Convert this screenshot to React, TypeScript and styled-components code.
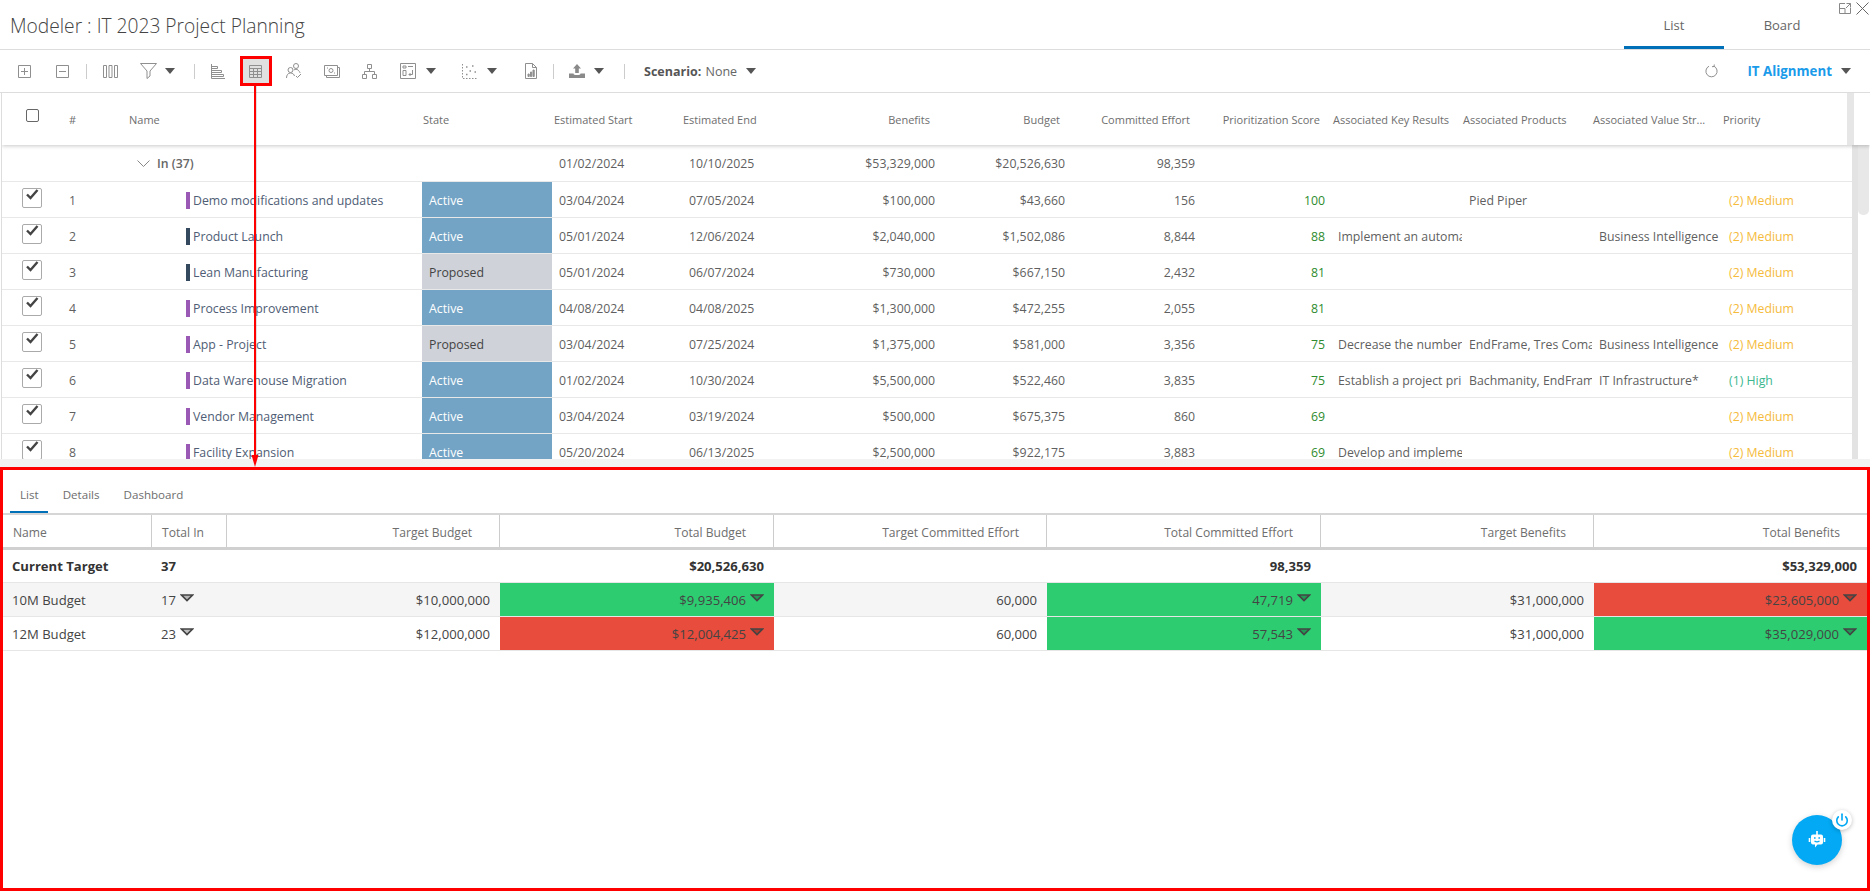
import React from 'react';
import styled, { createGlobalStyle } from 'styled-components';
import { Power } from 'lucide-react';

const FONT = `"Open Sans", "Noto Sans", sans-serif`;
const COLS = '60px 61px 299px 130px 130px 130px 128px 130px 130px 130px 132px 130px 130px 130px';
const HEAD_COLS = '60px 61px 299px 130px 130px 130px 128px 130px 130px 130px 132px 130px 130px 125px';
const PANEL_COLS = '149px 75px 273px 274px 273px 274px 273px 1fr';

const GlobalStyle = createGlobalStyle`
  html, body { margin: 0; padding: 0; background: #fff; }
  body { font-family: ${FONT}; color: #555; }
`;

const Page = styled.div`
  position: relative;
  width: 1870px;
  height: 893px;
  overflow: hidden;
  background: #fff;
  display: flex;
  flex-direction: column;
`;

const Header = styled.div`
  position: relative;
  height: 50px;
  box-sizing: border-box;
  flex: none;
  border-bottom: 1px solid #ddd;
  display: flex;
  align-items: stretch;
  padding: 0 30px 0 10px;
`;

const Title = styled.h1`
  margin: 0 auto 0 0;
  font-size: 19.2px;
  font-weight: 300;
  color: #444;
  line-height: 52px;
`;

const ViewTab = styled.div<{ $active?: boolean; $w: number }>`
  width: ${p => p.$w}px;
  height: 49px;
  box-sizing: border-box;
  text-align: center;
  font-size: 13px;
  line-height: 50px;
  color: #666;
  border-bottom: 3px solid ${p => (p.$active ? '#0070b8' : 'transparent')};
`;

const WindowIcons = styled.div`
  position: absolute;
  top: 2px;
  right: 1px;
  display: flex;
  align-items: center;
  gap: 5px;
`;

const Toolbar = styled.div`
  height: 43px;
  box-sizing: border-box;
  flex: none;
  border-bottom: 1px solid #ddd;
  display: flex;
  align-items: center;
  padding-left: 18px;
  font-size: 13px;
  color: #666;
`;

const ToolIcon = styled.svg<{ $ml?: number }>`
  flex: none;
  margin-left: ${p => p.$ml ?? 0}px;
  fill: none;
  stroke: #8f8f8f;
  stroke-width: 1;
`;

const RefreshIcon = styled(ToolIcon)`
  margin-left: auto;
`;

const ToolSep = styled.span<{ $ml: number }>`
  flex: none;
  width: 1px;
  height: 15px;
  margin-left: ${p => p.$ml}px;
  background: #ccc;
`;

const Caret = styled.span<{ $ml: number; $mr?: number }>`
  flex: none;
  margin-left: ${p => p.$ml}px;
  margin-right: ${p => p.$mr ?? 0}px;
  width: 0;
  height: 0;
  border-left: 5px solid transparent;
  border-right: 5px solid transparent;
  border-top: 6px solid #555;
`;

const Highlight = styled.div<{ $ml: number }>`
  flex: none;
  margin-left: ${p => p.$ml}px;
  width: 32px;
  height: 30px;
  box-sizing: border-box;
  border: 3px solid #f00;
  background: #e0e0e0;
  display: flex;
  align-items: center;
  justify-content: center;
`;

const Scenario = styled.span<{ $ml: number }>`
  margin-left: ${p => p.$ml}px;
  font-size: 12.5px;
  color: #666;
  b { font-weight: 700; color: #555; margin-right: 1px; }
`;

const Alignment = styled.span`
  margin-left: 29px;
  font-size: 13.3px;
  font-weight: 700;
  color: #1a9bea;
`;

const TopGrid = styled.div`
  height: 366px;
  flex: none;
  overflow: hidden;
  margin-left: 1px;
  border-left: 1px solid #ddd;
`;

const HeaderBar = styled.div`
  height: 52px;
  display: flex;
  position: relative;
  z-index: 1;
  box-shadow: 0 1px 4px rgba(0, 0, 0, 0.22);
  background: #fff;
`;

const HeaderCols = styled.div`
  display: grid;
  grid-template-columns: ${HEAD_COLS};
  align-items: center;
  padding-top: 1px;
  box-sizing: border-box;
`;

const HeaderGutter = styled.div`
  width: 7px;
  background: #e6e6e6;
`;

const HeadCell = styled.div<{ $right?: boolean; $pl?: number }>`
  font-size: 11px;
  color: #6e6e6e;
  white-space: nowrap;
  overflow: hidden;
  padding-left: ${p => p.$pl ?? 0}px;
  padding-right: ${p => (p.$right ? 10 : 0)}px;
  text-align: ${p => (p.$right ? 'right' : 'left')};
`;

const HeadCheck = styled.span`
  display: block;
  width: 13px;
  height: 13px;
  box-sizing: border-box;
  margin: -8px 0 0 24px;
  border: 1px solid #666;
  border-radius: 2px;
`;

const Body = styled.div`
  display: flex;
  height: 314px;
`;

const Rows = styled.div`
  width: 1850px;
  flex: none;
`;

const ScrollTrack = styled.div`
  width: 6px;
  flex: none;
  background: #e3e3e3;
`;

const ScrollZone = styled.div`
  flex: 1;
  padding-right: 1px;
`;

const ScrollThumb = styled.div`
  height: 70px;
  background: #e8e8e8;
  border-radius: 0 0 5px 5px;
`;

const Row = styled.div`
  display: grid;
  grid-template-columns: ${COLS};
  height: 36px;
  box-sizing: border-box;
  border-bottom: 1px solid #e8e8e8;
  align-items: stretch;
`;

const GroupRow = styled(Row)`
  height: 37px;
`;

const Cell = styled.div<{ $right?: boolean; $pl?: number; $color?: string }>`
  display: flex;
  align-items: center;
  justify-content: ${p => (p.$right ? 'flex-end' : 'flex-start')};
  padding-left: ${p => p.$pl ?? 0}px;
  padding-right: ${p => (p.$right ? 5 : 0)}px;
  padding-top: 1px;
  font-size: 12.3px;
  color: ${p => p.$color ?? '#5f5f5f'};
  white-space: nowrap;
  overflow: hidden;
  min-width: 0;
`;

const CheckBox = styled.span`
  width: 20px;
  height: 20px;
  box-sizing: border-box;
  margin: -4px 0 0 20px;
  border: 1px solid #aaa;
  border-radius: 2px;
  display: flex;
  align-items: flex-start;
  justify-content: center;
  background: #fff;
`;

const GroupLabel = styled.span`
  display: inline-flex;
  align-items: center;
  gap: 7px;
  font-weight: 600;
  color: #666;
`;

const NameBar = styled.span<{ $color: string }>`
  width: 4px;
  height: 17px;
  flex: none;
  margin-right: 3px;
  background: ${p => p.$color};
`;

const NameText = styled.span`
  color: #4f5d75;
`;

const StateCell = styled.div<{ $active: boolean }>`
  display: flex;
  align-items: center;
  padding-left: 7px;
  padding-top: 1px;
  font-size: 12.3px;
  background: ${p => (p.$active ? '#73a4c5' : '#cfd2d9')};
  color: ${p => (p.$active ? '#fff' : '#444')};
`;

const Splitter = styled.div`
  height: 8px;
  flex: none;
  background: #f2f2f2;
`;

const Panel = styled.div`
  position: relative;
  height: 424px;
  flex: none;
  box-sizing: border-box;
  border: 3px solid #f00;
`;

const PanelTabs = styled.div`
  height: 45px;
  box-sizing: border-box;
  display: flex;
  border-bottom: 2px solid #d6d6d6;
  padding-left: 7px;
  gap: 5px;
`;

const PanelTab = styled.div<{ $active?: boolean }>`
  padding: 0 9px 0 10px;
  height: 43px;
  box-sizing: border-box;
  font-size: 11.6px;
  line-height: 50px;
  color: #6e6e6e;
  border-bottom: 2px solid ${p => (p.$active ? '#0070b8' : 'transparent')};
`;

const PanelHead = styled.div`
  display: grid;
  grid-template-columns: ${PANEL_COLS};
  height: 35px;
  box-sizing: border-box;
  border-bottom: 3px solid #d0d0d0;
`;

const PanelHeadCell = styled.div<{ $right?: boolean; $last?: boolean }>`
  display: flex;
  align-items: center;
  justify-content: ${p => (p.$right ? 'flex-end' : 'flex-start')};
  padding: ${p => (p.$right ? '2px 27px 0 0' : '2px 0 0 10px')};
  font-size: 12.1px;
  color: #6e6e6e;
  border-right: ${p => (p.$last ? 'none' : '1px solid #ccc')};
`;

const PanelRow = styled.div<{ $shade?: boolean; $h?: number }>`
  display: grid;
  grid-template-columns: ${PANEL_COLS};
  height: ${p => p.$h ?? 34}px;
  box-sizing: border-box;
  border-bottom: 1px solid #e6e6e6;
  background: ${p => (p.$shade ? '#f5f5f5' : '#fff')};
`;

const PanelCell = styled.div<{ $right?: boolean; $bold?: boolean; $bg?: string; $pl?: number }>`
  display: flex;
  align-items: center;
  justify-content: ${p => (p.$right ? 'flex-end' : 'flex-start')};
  gap: 4px;
  padding: ${p => (p.$right ? '0 10px 0 0' : `0 0 0 ${p.$pl ?? 9}px`)};
  font-size: 13.1px;
  font-weight: ${p => (p.$bold ? 700 : 400)};
  color: ${p => (p.$bold ? '#333' : '#444')};
  background: ${p => p.$bg ?? 'transparent'};
`;

const Fold = styled.svg`
  flex: none;
  margin-top: -3px;
`;

const Fab = styled.div`
  position: absolute;
  left: 1789px;
  top: 345px;
  width: 50px;
  height: 50px;
  border-radius: 50%;
  background: #03a9f4;
  box-shadow: 0 2px 6px rgba(0, 0, 0, 0.18);
  display: flex;
  align-items: center;
  justify-content: center;
`;

const FabBadge = styled.div`
  position: absolute;
  top: -5px;
  right: -10px;
  width: 20px;
  height: 20px;
  border-radius: 50%;
  background: #fff;
  box-shadow: 0 1px 4px rgba(0, 0, 0, 0.25);
  display: flex;
  align-items: center;
  justify-content: center;
  color: #03a9f4;
`;

const Arrow = styled.svg`
  position: absolute;
  left: 250px;
  top: 86px;
  z-index: 2;
  overflow: visible;
`;

const GREEN = '#2ecc71';
const RED = '#e74c3c';

type Project = {
  name: string;
  bar: string;
  active: boolean;
  start: string;
  end: string;
  benefits: string;
  budget: string;
  effort: string;
  score: number;
  keyResults?: string;
  products?: string;
  stream?: string;
  priority: string;
};

const PURPLE = '#9b59b6';
const NAVY = '#34495e';

const projects: Project[] = [
  { name: 'Demo modifications and updates', bar: PURPLE, active: true, start: '03/04/2024', end: '07/05/2024', benefits: '$100,000', budget: '$43,660', effort: '156', score: 100, products: 'Pied Piper', priority: '(2) Medium' },
  { name: 'Product Launch', bar: NAVY, active: true, start: '05/01/2024', end: '12/06/2024', benefits: '$2,040,000', budget: '$1,502,086', effort: '8,844', score: 88, keyResults: 'Implement an automa', stream: 'Business Intelligence', priority: '(2) Medium' },
  { name: 'Lean Manufacturing', bar: NAVY, active: false, start: '05/01/2024', end: '06/07/2024', benefits: '$730,000', budget: '$667,150', effort: '2,432', score: 81, priority: '(2) Medium' },
  { name: 'Process Improvement', bar: PURPLE, active: true, start: '04/08/2024', end: '04/08/2025', benefits: '$1,300,000', budget: '$472,255', effort: '2,055', score: 81, priority: '(2) Medium' },
  { name: 'App - Project', bar: PURPLE, active: false, start: '03/04/2024', end: '07/25/2024', benefits: '$1,375,000', budget: '$581,000', effort: '3,356', score: 75, keyResults: 'Decrease the number', products: 'EndFrame, Tres Coma', stream: 'Business Intelligence', priority: '(2) Medium' },
  { name: 'Data Warehouse Migration', bar: PURPLE, active: true, start: '01/02/2024', end: '10/30/2024', benefits: '$5,500,000', budget: '$522,460', effort: '3,835', score: 75, keyResults: 'Establish a project pri', products: 'Bachmanity, EndFram', stream: 'IT Infrastructure*', priority: '(1) High' },
  { name: 'Vendor Management', bar: PURPLE, active: true, start: '03/04/2024', end: '03/19/2024', benefits: '$500,000', budget: '$675,375', effort: '860', score: 69, priority: '(2) Medium' },
  { name: 'Facility Expansion', bar: PURPLE, active: true, start: '05/20/2024', end: '06/13/2025', benefits: '$2,500,000', budget: '$922,175', effort: '3,883', score: 69, keyResults: 'Develop and impleme', priority: '(2) Medium' },
];

const FoldMark = () => (
  <Fold width="14" height="8" viewBox="0 0 14 8">
    <path d="M1.5 1h11L7 6.5z" fill="rgba(0,0,0,.25)" stroke="#444" strokeWidth="1.6" />
  </Fold>
);

const App = () => (
  <Page>
    <GlobalStyle />
    <Header>
      <Title>Modeler : IT 2023 Project Planning</Title>
      <ViewTab $active $w={100}>List</ViewTab>
      <ViewTab $w={116}>Board</ViewTab>
      <WindowIcons>
        <svg width="12" height="11" viewBox="0 0 12 11" fill="none" stroke="#888">
          <path d="M6 .5H.5v10h11V5M.5 5.5H6v5M7.5.5h4v4M11.5.5 7 5" />
        </svg>
        <svg width="13" height="13" viewBox="0 0 13 13" fill="none" stroke="#666">
          <path d="M.5.5l12 12M12.5.5l-12 12" />
        </svg>
      </WindowIcons>
    </Header>

    <Toolbar>
      <ToolIcon width="13" height="13" viewBox="0 0 13 13">
        <path d="M.5.5h12v12H.5zM6.5 3v7M3 6.5h7" />
      </ToolIcon>
      <ToolIcon $ml={25} width="13" height="13" viewBox="0 0 13 13">
        <path d="M.5.5h12v12H.5zM3 6.5h7" />
      </ToolIcon>
      <ToolSep $ml={17} />
      <ToolIcon $ml={15.5} width="15" height="13" viewBox="0 0 15 13">
        <path d="M.5.5h3v12h-3zM6 .5h3v12H6zM11.5.5h3v12h-3z" />
      </ToolIcon>
      <ToolIcon $ml={22.5} width="17" height="16" viewBox="0 0 17 16">
        <path d="M.5.5h16L10 8v5l-3 2.5V8z" />
      </ToolIcon>
      <Caret $ml={8} />
      <ToolSep $ml={18.5} />
      <ToolIcon $ml={16} width="14" height="15" viewBox="0 0 14 15">
        <path d="M.5 0v14.5H14M.5 2.5h6v2H.5M.5 6.5h10v2H.5M.5 10.5h12v2H.5" />
      </ToolIcon>
      <Highlight $ml={15}>
        <ToolIcon width="13" height="13" viewBox="0 0 13 13">
          <path d="M.5.5h12v12H.5zM.5 3.5h12M.5 6.5h12M.5 9.5h12M4.5 3.5v9M8.5 3.5v9" />
        </ToolIcon>
      </Highlight>
      <ToolIcon $ml={14} width="16" height="16" viewBox="0 0 16 16">
        <circle cx="10" cy="3" r="2.5" />
        <circle cx="4.5" cy="7" r="2.5" />
        <path d="M.5 15c0-3 1.5-5 4-5s3.5 1.5 4 3M8 7c1-1 3-1 4 0s2 2 2 3M10 13l1.5 1.5L15 11" />
      </ToolIcon>
      <ToolIcon $ml={22} width="16" height="13" viewBox="0 0 16 13">
        <path d="M.5.5h13v10H.5zM2.5 10.5v2h13v-10h-2M3 3h1M10 8h1" />
        <circle cx="7" cy="5.5" r="2" />
      </ToolIcon>
      <ToolIcon $ml={22} width="15" height="15" viewBox="0 0 15 15">
        <path d="M5.5.5h4v4h-4zM.5 10.5h4v4h-4zM10.5 10.5h4v4h-4zM7.5 4.5v3M2.5 10.5v-3h10v3" />
      </ToolIcon>
      <ToolIcon $ml={23} width="16" height="16" viewBox="0 0 16 16">
        <path d="M.5.5h15v15H.5zM3 3h3v2H3zM8 3.5h5M3 7.5h3v5H3zM12.5 7v4.5H9M10.5 10l-1.5 1.5 1.5 1.5" />
      </ToolIcon>
      <Caret $ml={10} />
      <ToolIcon $ml={26.5} width="15" height="15" viewBox="0 0 15 15">
        <path d="M.5 0v14.5H15" strokeDasharray="1.5 1.5" />
        <path d="M4 3h1.5M10 2h1.5M7.5 7H9M12.5 8H14M4 10.5h1.5" strokeWidth="1.4" />
      </ToolIcon>
      <Caret $ml={9.5} />
      <ToolIcon $ml={28} width="12" height="16" viewBox="0 0 12 16">
        <path d="M.5.5h7l4 4v11H.5zM7.5.5v4h4" />
        <path d="M3 13.5V11h1.2v2.5zM5.5 13.5V9h1.2v4.5zM8 13.5V7h1.2v6.5z" fill="#8f8f8f" />
      </ToolIcon>
      <ToolSep $ml={16.5} />
      <ToolIcon $ml={15} width="16" height="16" viewBox="0 0 16 16">
        <path d="M8 1l4 4.5H9.8V10H6.2V5.5H4zM0 10.5h4.5a3.5 1.5 0 0 0 7 0H16V15H0z" fill="#8a8a8a" stroke="none" />
      </ToolIcon>
      <Caret $ml={9} />
      <ToolSep $ml={19.5} />
      <Scenario $ml={19.5}><b>Scenario:</b> None</Scenario>
      <Caret $ml={9} />
      <RefreshIcon width="13" height="14" viewBox="0 0 13 14">
        <path d="M4 2.2A5.6 5.6 0 1 0 9 2.2M9.3 .5 9 2.5l-2 .2" />
      </RefreshIcon>
      <Alignment>IT Alignment</Alignment>
      <Caret $ml={9} $mr={19} />
    </Toolbar>

    <TopGrid>
      <HeaderBar>
        <HeaderCols>
          <HeadCheck />
          <HeadCell $pl={7}>#</HeadCell>
          <HeadCell $pl={6}>Name</HeadCell>
          <HeadCell $pl={1}>State</HeadCell>
          <HeadCell $pl={2}>Estimated Start</HeadCell>
          <HeadCell $pl={1}>Estimated End</HeadCell>
          <HeadCell $right>Benefits</HeadCell>
          <HeadCell $right>Budget</HeadCell>
          <HeadCell $right>Committed Effort</HeadCell>
          <HeadCell $right>Prioritization Score</HeadCell>
          <HeadCell $pl={3}>Associated Key Results</HeadCell>
          <HeadCell $pl={1}>Associated Products</HeadCell>
          <HeadCell $pl={1}>Associated Value Str...</HeadCell>
          <HeadCell $pl={1}>Priority</HeadCell>
        </HeaderCols>
        <HeaderGutter />
      </HeaderBar>
      <Body>
        <Rows>
          <GroupRow>
            <Cell />
            <Cell />
            <Cell $pl={14}>
              <GroupLabel>
                <svg width="13" height="7" viewBox="0 0 13 7" fill="none" stroke="#888">
                  <path d="M.5.5l6 6 6-6" />
                </svg>
                In (37)
              </GroupLabel>
            </Cell>
            <Cell />
            <Cell $pl={7}>01/02/2024</Cell>
            <Cell $pl={7}>10/10/2025</Cell>
            <Cell $right>$53,329,000</Cell>
            <Cell $right>$20,526,630</Cell>
            <Cell $right>98,359</Cell>
          </GroupRow>
          {projects.map((p, i) => (
            <Row key={p.name}>
              <Cell>
                <CheckBox>
                  <svg width="15" height="13" viewBox="0 0 15 13" fill="none" stroke="#444" strokeWidth="2.4">
                    <path d="M2 5.5l3.5 3.5 7-8" />
                  </svg>
                </CheckBox>
              </Cell>
              <Cell $pl={7}>{i + 1}</Cell>
              <Cell $pl={63}>
                <NameBar $color={p.bar} />
                <NameText>{p.name}</NameText>
              </Cell>
              <StateCell $active={p.active}>{p.active ? 'Active' : 'Proposed'}</StateCell>
              <Cell $pl={7}>{p.start}</Cell>
              <Cell $pl={7}>{p.end}</Cell>
              <Cell $right>{p.benefits}</Cell>
              <Cell $right>{p.budget}</Cell>
              <Cell $right>{p.effort}</Cell>
              <Cell $right $color="#2e8b2e">{p.score}</Cell>
              <Cell $pl={8}>{p.keyResults}</Cell>
              <Cell $pl={7}>{p.products}</Cell>
              <Cell $pl={7}>{p.stream}</Cell>
              <Cell $pl={7} $color={p.priority === '(1) High' ? '#3bb78f' : '#f5bb3c'}>{p.priority}</Cell>
            </Row>
          ))}
        </Rows>
        <ScrollTrack />
        <ScrollZone><ScrollThumb /></ScrollZone>
      </Body>
    </TopGrid>

    <Splitter />

    <Panel>
      <PanelTabs>
        <PanelTab $active>List</PanelTab>
        <PanelTab>Details</PanelTab>
        <PanelTab>Dashboard</PanelTab>
      </PanelTabs>
      <PanelHead>
        <PanelHeadCell>Name</PanelHeadCell>
        <PanelHeadCell>Total In</PanelHeadCell>
        <PanelHeadCell $right>Target Budget</PanelHeadCell>
        <PanelHeadCell $right>Total Budget</PanelHeadCell>
        <PanelHeadCell $right>Target Committed Effort</PanelHeadCell>
        <PanelHeadCell $right>Total Committed Effort</PanelHeadCell>
        <PanelHeadCell $right>Target Benefits</PanelHeadCell>
        <PanelHeadCell $right $last>Total Benefits</PanelHeadCell>
      </PanelHead>
      <PanelRow $h={33}>
        <PanelCell $bold>Current Target</PanelCell>
        <PanelCell $bold>37</PanelCell>
        <PanelCell />
        <PanelCell $right $bold>$20,526,630</PanelCell>
        <PanelCell />
        <PanelCell $right $bold>98,359</PanelCell>
        <PanelCell />
        <PanelCell $right $bold>$53,329,000</PanelCell>
      </PanelRow>
      <PanelRow $shade>
        <PanelCell>10M Budget</PanelCell>
        <PanelCell>17 <FoldMark /></PanelCell>
        <PanelCell $right>$10,000,000</PanelCell>
        <PanelCell $right $bg={GREEN}>$9,935,406 <FoldMark /></PanelCell>
        <PanelCell $right>60,000</PanelCell>
        <PanelCell $right $bg={GREEN}>47,719 <FoldMark /></PanelCell>
        <PanelCell $right>$31,000,000</PanelCell>
        <PanelCell $right $bg={RED}>$23,605,000 <FoldMark /></PanelCell>
      </PanelRow>
      <PanelRow>
        <PanelCell>12M Budget</PanelCell>
        <PanelCell>23 <FoldMark /></PanelCell>
        <PanelCell $right>$12,000,000</PanelCell>
        <PanelCell $right $bg={RED}>$12,004,425 <FoldMark /></PanelCell>
        <PanelCell $right>60,000</PanelCell>
        <PanelCell $right $bg={GREEN}>57,543 <FoldMark /></PanelCell>
        <PanelCell $right>$31,000,000</PanelCell>
        <PanelCell $right $bg={GREEN}>$35,029,000 <FoldMark /></PanelCell>
      </PanelRow>
      <Fab>
        <svg width="18" height="20" viewBox="0 0 18 20">
          <path d="M9 1v4M1.5 8v4M16.5 8v4" stroke="#fff" strokeWidth="1.6" fill="none" />
          <path d="M5 4.5h8a2 2 0 0 1 2 2v6a2 2 0 0 1-2 2H9.5L7 17.5v-3H5a2 2 0 0 1-2-2v-6a2 2 0 0 1 2-2z" fill="#fff" />
          <path d="M6 8h1.6M10.4 8H12M6.5 11c1.5 1 3.5 1 5 0" stroke="#03a9f4" strokeWidth="1.3" fill="none" />
        </svg>
        <FabBadge><Power size={14} strokeWidth={2.8} /></FabBadge>
      </Fab>
    </Panel>

    <Arrow width="10" height="381" viewBox="0 0 10 381">
      <path d="M6 0v372" stroke="rgba(0,0,0,.12)" strokeWidth="2" />
      <path d="M5 0v370" stroke="#f00" strokeWidth="2" />
      <path d="M1.5 369h7L5 381z" fill="#f00" />
    </Arrow>
  </Page>
);

export default App;
